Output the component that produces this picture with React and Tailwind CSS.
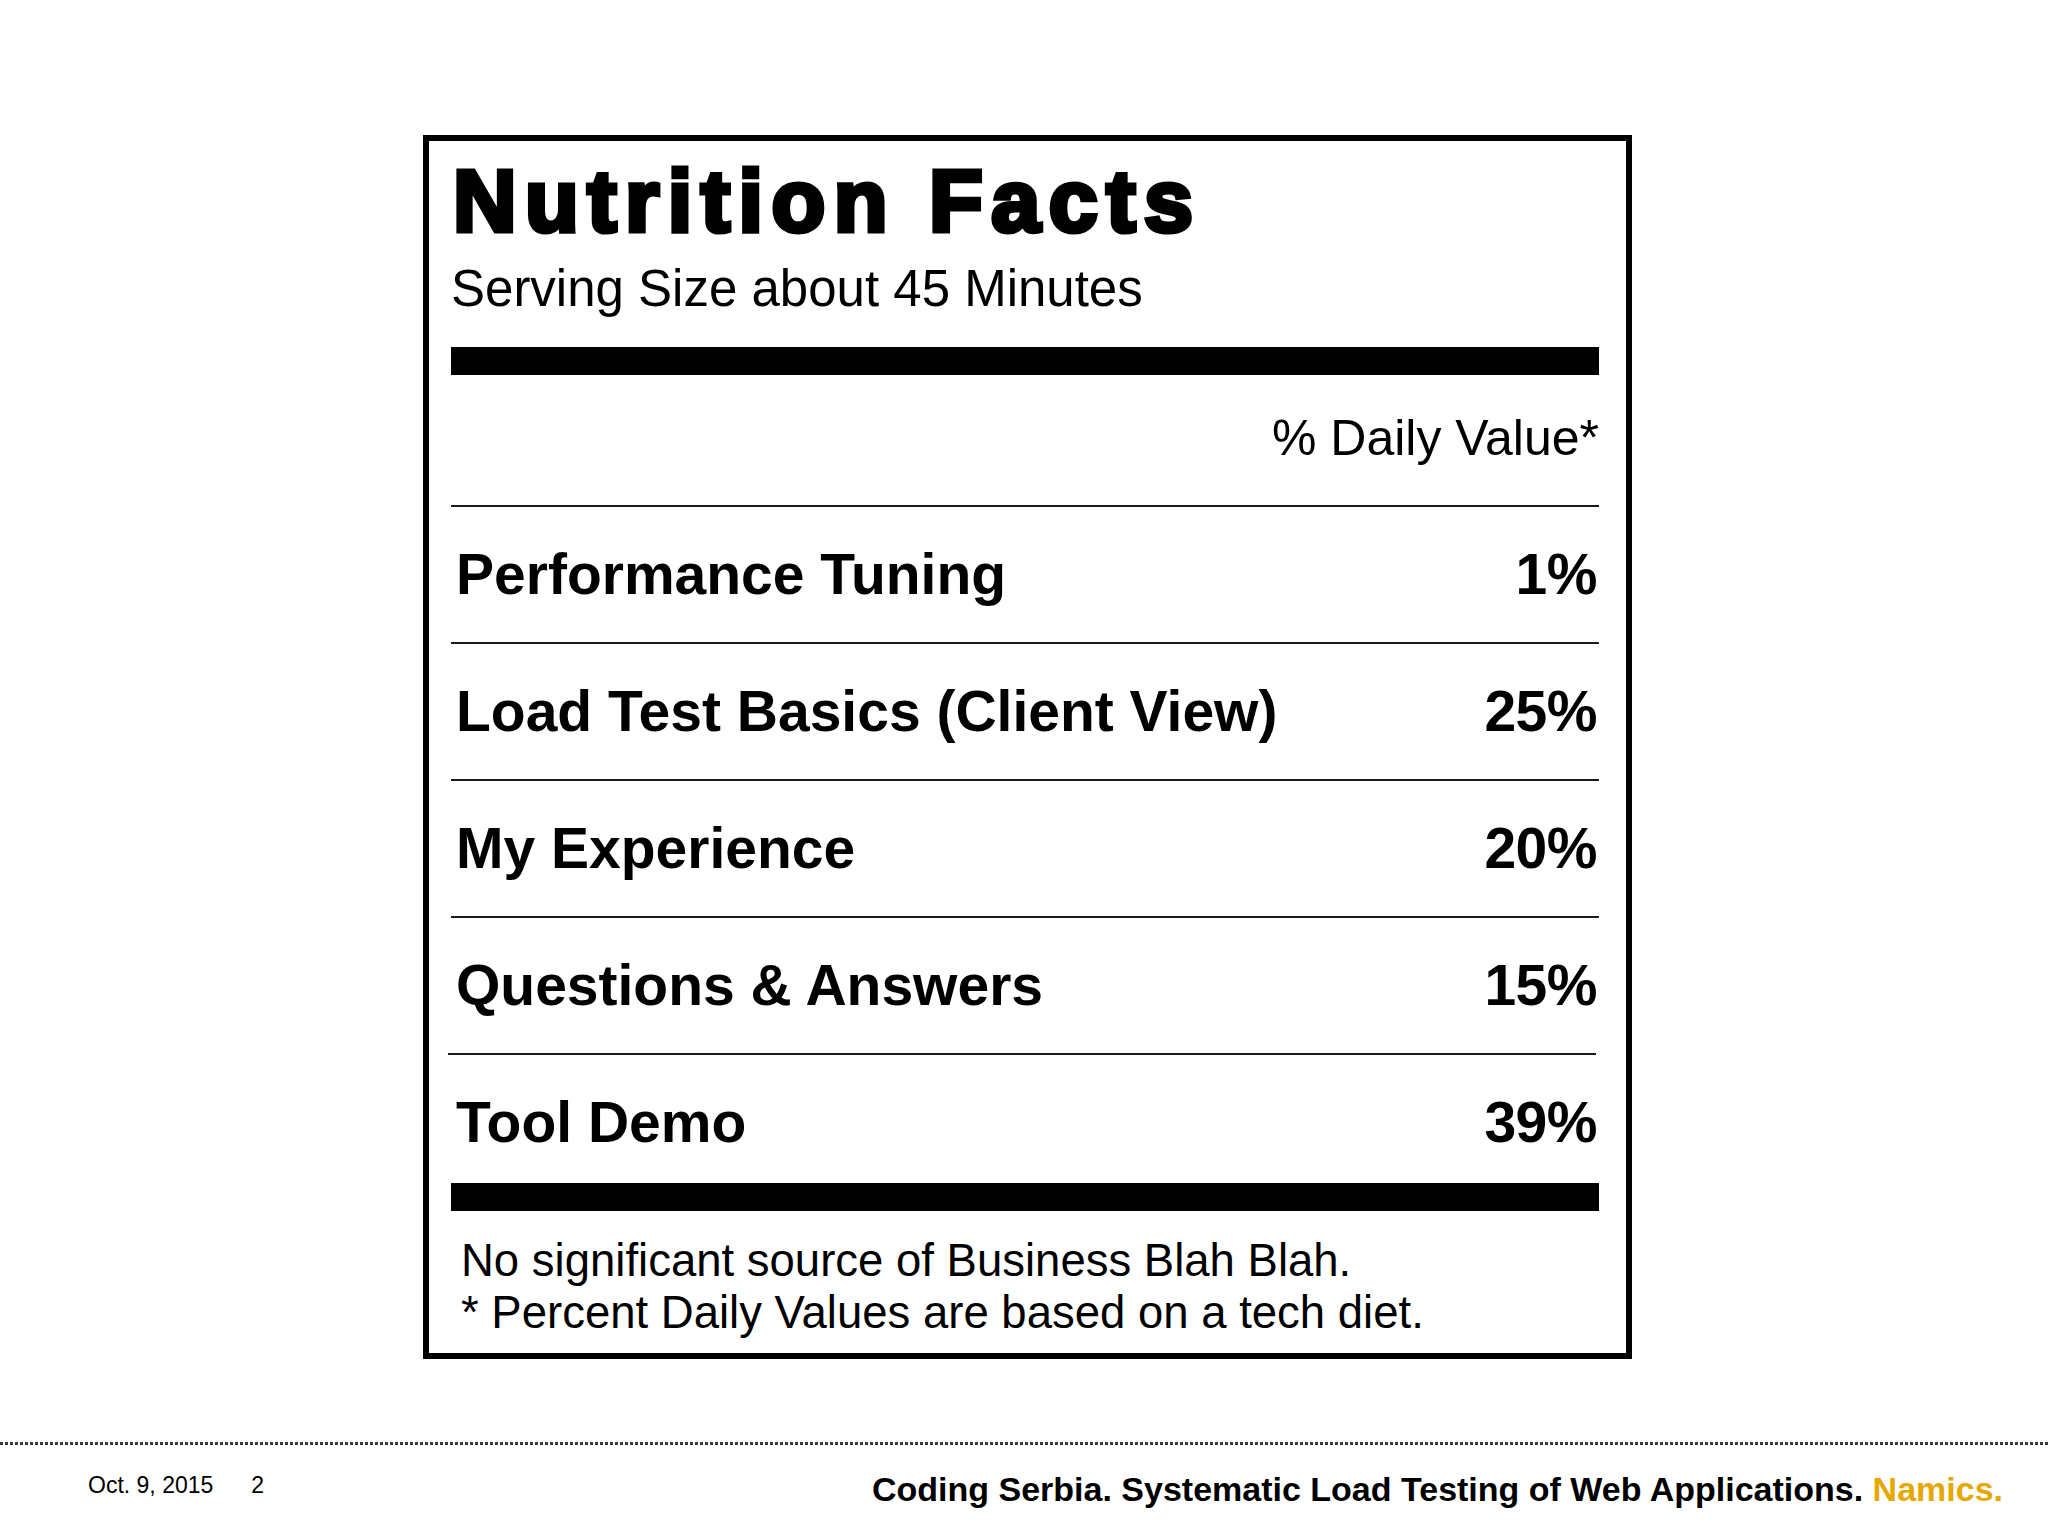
import React from "react";

const rows = [
  { label: "Performance Tuning", value: "1%" },
  { label: "Load Test Basics (Client View)", value: "25%" },
  { label: "My Experience", value: "20%" },
  { label: "Questions & Answers", value: "15%" },
];

export default function App() {
  return (
    <div className="w-[2048px] h-[1536px] bg-white text-black font-['Liberation_Sans',Arial,Helvetica,sans-serif] flex flex-col overflow-hidden">
      {/* Label box */}
      <div className="ml-[423px] mt-[135px] w-[1209px] h-[1224px] border-[6px] border-black pl-[22px] pr-[27px] pt-[16px] flex flex-col">
        <h1 className="pl-[2px] text-[88px] leading-none font-bold tracking-[8.5px] [-webkit-text-stroke:5px_black] whitespace-nowrap">
          Nutrition Facts
        </h1>
        <div className="mt-[18px] text-[51px] leading-none whitespace-nowrap">
          Serving Size about 45 Minutes
        </div>
        <div className="mt-[33px] h-[28px] bg-black" />
        <div className="mt-[38px] text-[50px] leading-none text-right whitespace-nowrap">
          % Daily Value*
        </div>
        <div className="mt-[42px] h-[2px] bg-[#1a1a1a]" />
        {rows.map((r, i) => (
          <div key={r.label} className="flex flex-col">
            <div className="h-[135px] pt-[39px] pl-[5px] pr-[2px] flex items-start justify-between text-[57px] leading-none font-bold whitespace-nowrap">
              <span>{r.label}</span>
              <span className="tracking-[-0.5px]">{r.value}</span>
            </div>
            <div
              className={
                i === rows.length - 1
                  ? "h-[2px] bg-[#1a1a1a] -ml-[3px] mr-[3px]"
                  : "h-[2px] bg-[#1a1a1a]"
              }
            />
          </div>
        ))}
        <div className="h-[128px] pt-[39px] pl-[5px] pr-[2px] flex items-start justify-between text-[57px] leading-none font-bold whitespace-nowrap">
          <span>Tool Demo</span>
          <span className="tracking-[-0.5px]">39%</span>
        </div>
        <div className="h-[28px] bg-black" />
        <div className="mt-[24px] pl-[10px] text-[45.5px] leading-[52px] whitespace-nowrap">
          <p>No significant source of Business Blah Blah.</p>
          <p>* Percent Daily Values are based on a tech diet.</p>
        </div>
      </div>

      {/* Footer */}
      <div className="mt-[83px] h-[3px] w-full bg-[repeating-linear-gradient(90deg,#3a3a3a_0px,#3a3a3a_3px,transparent_3px,transparent_5px)]" />
      <div className="flex items-start justify-between pl-[88px] pr-[45px] pt-[27px]">
        <div className="mt-[2px] flex text-[23px] leading-none whitespace-nowrap">
          <span>Oct. 9, 2015</span>
          <span className="ml-[38px]">2</span>
        </div>
        <div className="text-[34px] leading-none font-bold whitespace-nowrap">
          Coding Serbia. Systematic Load Testing of Web Applications.{" "}
          <span className="text-[#e6a800]">Namics.</span>
        </div>
      </div>
    </div>
  );
}
